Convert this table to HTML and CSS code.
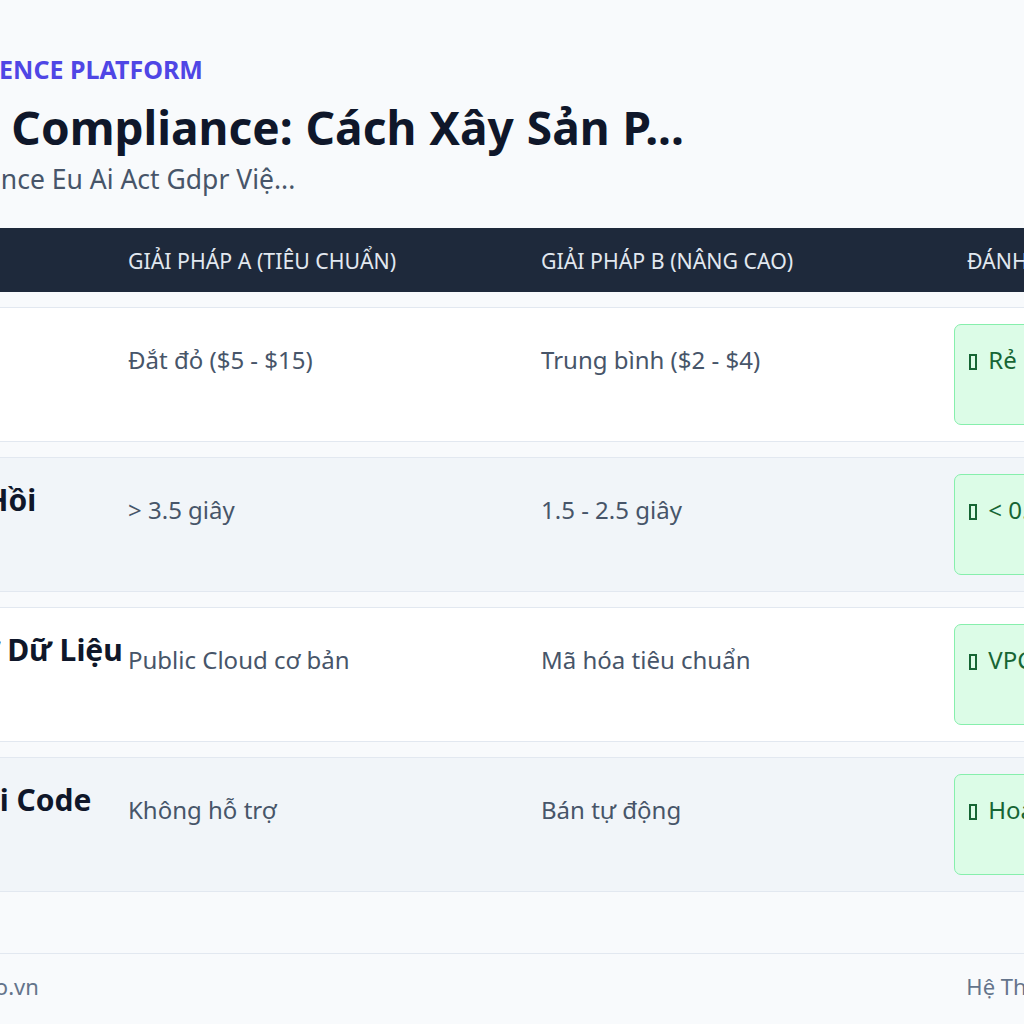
FILE: index.html
```html
<!DOCTYPE html>
<html lang="vi">
<head>
<meta charset="utf-8">
<title>GDPR Compliance</title>
<link rel="stylesheet" href="styles.css">
</head>
<body>
<div class="page">
  <header class="hero">
    <div class="eyebrow">GDPR INTELLIGENCE PLATFORM</div>
    <h1 class="title">AI GDPR Compliance: Cách Xây Sản P...</h1>
    <p class="subtitle">Tag: Ai Compliance Eu Ai Act Gdpr Việ...</p>
  </header>

  <div class="table">
    <div class="thead">
      <div class="th">Tiêu chí</div>
      <div class="th">Giải pháp A (Tiêu chuẩn)</div>
      <div class="th">Giải pháp B (Nâng cao)</div>
      <div class="th th-verdict">Đánh giá tối ưu</div>
    </div>

    <div class="row">
      <div class="td td-name">Chi Phí</div>
      <div class="td td-text">Đắt đỏ ($5 - $15)</div>
      <div class="td td-text">Trung bình ($2 - $4)</div>
      <div class="td"><div class="badge"><span class="tofu"></span> Rẻ nhất ($0.5 - $1)</div></div>
    </div>

    <div class="row alt">
      <div class="td td-name">Tỉ Phản Hồi</div>
      <div class="td td-text">&gt; 3.5 giây</div>
      <div class="td td-text">1.5 - 2.5 giây</div>
      <div class="td"><div class="badge"><span class="tofu"></span> &lt; 0.8 giây</div></div>
    </div>

    <div class="row">
      <div class="td td-name">Riêng Tư Dữ Liệu</div>
      <div class="td td-text">Public Cloud cơ bản</div>
      <div class="td td-text">Mã hóa tiêu chuẩn</div>
      <div class="td"><div class="badge"><span class="tofu"></span> VPC riêng biệt</div></div>
    </div>

    <div class="row alt">
      <div class="td td-name">Tự Gỡ Lỗi Code</div>
      <div class="td td-text">Không hỗ trợ</div>
      <div class="td td-text">Bán tự động</div>
      <div class="td"><div class="badge"><span class="tofu"></span> Hoàn toàn tự động</div></div>
    </div>
  </div>

  <footer class="footer">
    <span>© 2025 tuvanai.pro.vn</span>
    <span>Hệ Thống Tư Vấn AI VN</span>
  </footer>
</div>
</body>
</html>
```

FILE: styles.css
```css
* { box-sizing: border-box; }

html, body {
  margin: 0;
  padding: 0;
  background: #f8fafc;
}

body {
  display: flex;
  justify-content: center;
  overflow: hidden;
  font-family: "Noto Sans", "Open Sans", sans-serif;
  color: #0f172a;
}

.page {
  width: 1404px;
  flex-shrink: 0;
  padding-top: 52px;
}

.hero {
  display: flex;
  flex-direction: column;
}

.eyebrow {
  font-size: 25px;
  font-weight: 700;
  color: #4f46e5;
  line-height: 34px;
}

.title {
  margin: 10px 0 0;
  font-size: 46px;
  font-weight: 700;
  line-height: 62px;
  color: #0f172a;
  word-spacing: 1px;
}

.subtitle {
  margin: 1px 0 0;
  font-size: 26.5px;
  line-height: 40px;
  color: #475569;
}

.table {
  margin-top: 29px;
  display: flex;
  flex-direction: column;
  gap: 15px;
}

.thead,
.row {
  display: grid;
  grid-template-columns: 302px 413px 413px 1fr;
}

.thead {
  background: #1e293b;
  height: 64px;
  align-items: center;
}

.th {
  padding: 0 16px;
  font-size: 21.3px;
  color: #e2e8f0;
  text-transform: uppercase;
  white-space: nowrap;
}

.th-verdict { padding-left: 29px; }

.row {
  background: #ffffff;
  border-top: 1px solid #e2e8f0;
  border-bottom: 1px solid #e2e8f0;
}

.row.alt { background: #f1f5f9; }

.td {
  padding: 16px;
  white-space: nowrap;
}

.td-name {
  padding-top: 20px;
  padding-left: 58px;
  font-size: 30px;
  font-weight: 700;
  line-height: 44px;
  color: #0f172a;
}

.td-text {
  padding-top: 37px;
  font-size: 24px;
  line-height: 30px;
  color: #475569;
}

.badge {
  height: 101px;
  padding: 20px 14px;
  background: #dcfce7;
  border: 1px solid #86efac;
  border-radius: 7px;
  color: #166534;
  font-size: 24px;
  line-height: 30px;
  white-space: nowrap;
}

.tofu {
  display: inline-block;
  width: 8px;
  height: 16px;
  margin-right: 5px;
  border: 2px solid currentColor;
  vertical-align: -1px;
}

.footer {
  margin-top: 61px;
  border-top: 1px solid #e2e8f0;
  height: 64px;
  padding-right: 8px;
  display: flex;
  justify-content: space-between;
  align-items: center;
  font-size: 22px;
  color: #64748b;
}
```
